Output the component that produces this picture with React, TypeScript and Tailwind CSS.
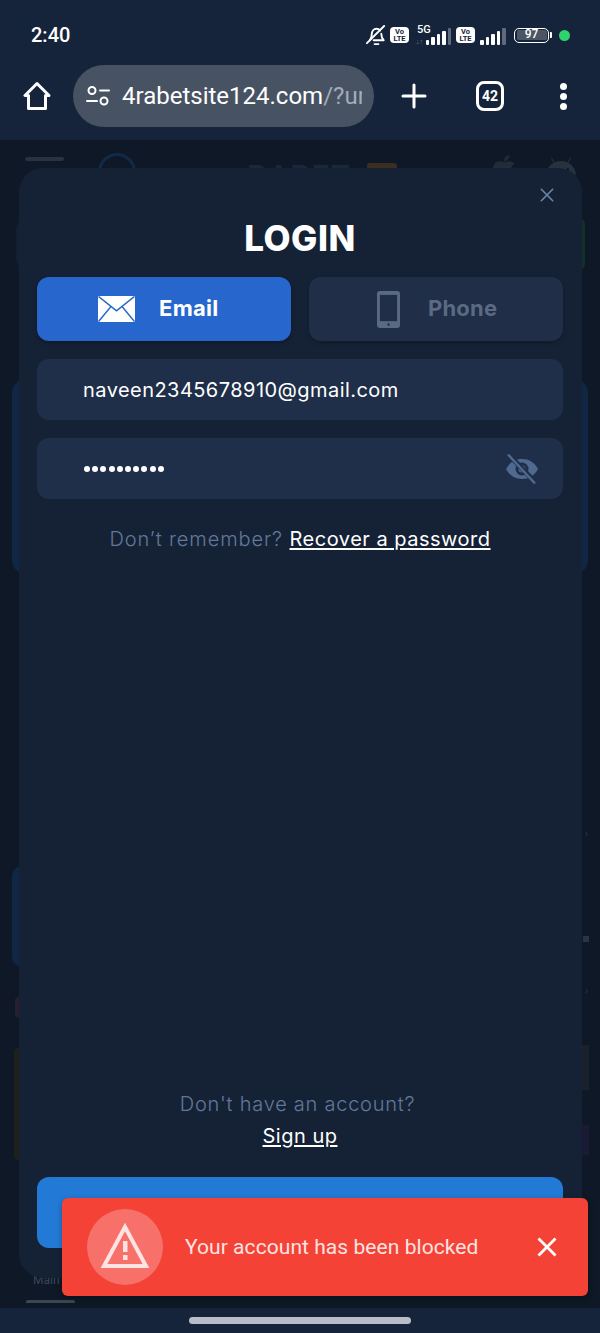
import React from "react";
import { FaApple, FaAndroid } from "react-icons/fa";

const poppins = { fontFamily: "Inter, 'Noto Sans', sans-serif" };

function Bars() {
  const hs = [5, 8, 11, 14, 17];
  return (
    <div className="flex items-end gap-[2px] h-[17px]">
      {hs.map((h, i) => (
        <div key={i} className={`w-[3.5px] rounded-[1px] ${i < 4 ? "bg-white" : "bg-[#5f6b7d]"}`} style={{ height: h }} />
      ))}
    </div>
  );
}

function VoLte() {
  return (
    <div className="w-[19px] h-[16px] rounded-[4px] bg-white flex flex-col items-center justify-center text-[#15243a] font-bold text-[7.5px] leading-[7px] font-['Roboto']">
      <span>Vo</span>
      <span>LTE</span>
    </div>
  );
}

function StatusBar() {
  return (
    <div className="h-[65px] flex items-end pb-[18px] pl-[31px] pr-[30px] justify-between">
      <span className="text-white text-[20px] leading-[24px] font-['Roboto'] font-medium">2:40</span>
      <div className="flex items-center h-[24px]">
        <svg width="21" height="23" viewBox="0 0 22 24" fill="none" stroke="#fff" strokeWidth="2" strokeLinecap="round" strokeLinejoin="round">
          <path d="M4 17c1.500-1.500 2-3 2-6 0-3.500 2.200-6 5-6 1.500 0 2.800.6 3.700 1.700" />
          <path d="M16 10c0 3 .5 5 2.500 7H8" />
          <path d="M1 20 19 2" />
          <path d="M9 21h4" />
        </svg>
        <div className="ml-[3px]"><VoLte /></div>
        <div className="relative ml-[7px] w-[35px] h-[20px] flex justify-end items-end">
          <span className="absolute left-[1px] -top-[1px] text-white text-[11px] leading-[11px] font-['Roboto'] font-medium">5G</span>
          <span className="absolute left-0 bottom-0 text-[#7b8595] text-[7px] leading-[7px]">↓↑</span>
          <Bars />
        </div>
        <div className="ml-[5px]"><VoLte /></div>
        <div className="ml-[5px] mt-[3px]"><Bars /></div>
        <div className="ml-[8.5px] flex items-center">
          <div className="w-[35px] h-[15px] rounded-[5px] border-[1.5px] border-white p-[1.5px]">
            <div className="w-full h-full bg-[#4b5563] rounded-[1.5px] text-white text-[12px] leading-[9px] font-['Roboto'] font-medium text-center">97</div>
          </div>
          <div className="w-[2px] h-[6px] bg-white ml-[1px] rounded-r-[1px]" />
        </div>
        <div className="w-[11px] h-[11px] rounded-full bg-[#2fd36b] ml-[7px]" />
      </div>
    </div>
  );
}

function Toolbar() {
  return (
    <div className="h-[75px] flex items-start">
      <div className="w-[73px] h-[62px] flex items-center justify-center">
        <svg width="28" height="30" viewBox="0 0 28 30" fill="none" stroke="#fff" strokeWidth="3" strokeLinejoin="round">
          <path d="M14 2.500 2 14.500h3.500v13h17v-13H26Z" />
        </svg>
      </div>
      <div className="w-[301px] h-[62px] rounded-full bg-[#475263] flex items-center pl-[13px]">
        <svg width="24" height="22" viewBox="0 0 24 22" fill="none" stroke="#fff" strokeWidth="2" strokeLinecap="round">
          <circle cx="6" cy="5.500" r="3.500" />
          <path d="M14 5.500h9" />
          <circle cx="18" cy="16" r="3.500" />
          <path d="M1 16h10" />
        </svg>
        <div className="ml-[12px] w-[240px] overflow-hidden whitespace-nowrap text-[24px] leading-[30px] font-['Roboto'] text-white">
          4rabetsite124.com<span className="text-[#a3abb7]">/?ur</span>
        </div>
      </div>
      <div className="w-[80px] h-[62px] flex items-center justify-center">
        <svg width="26" height="26" viewBox="0 0 26 26" stroke="#fff" strokeWidth="3" strokeLinecap="round">
          <path d="M13 2v22M2 13h22" />
        </svg>
      </div>
      <div className="w-[72px] h-[62px] flex items-center justify-center">
        <div className="w-[28px] h-[30px] rounded-[8px] border-[3px] border-white flex items-center justify-center text-white font-['Roboto'] font-bold text-[14px] leading-none">42</div>
      </div>
      <div className="flex-1 h-[62px] flex flex-col items-center justify-center gap-[3px]">
        <div className="w-[7px] h-[7px] rounded-full bg-white" />
        <div className="w-[7px] h-[7px] rounded-full bg-white" />
        <div className="w-[7px] h-[7px] rounded-full bg-white" />
      </div>
    </div>
  );
}

function DimBackground() {
  return (
    <div className="flex-1 relative overflow-hidden bg-[#0e1826]">
      <div className="flex items-start pt-[13px] pl-[25px]">
        <div className="w-[39px] h-[4px] mt-[4px] bg-[#283341] rounded-full" />
        <div className="ml-[34px] w-[38px] h-[38px] rounded-full border-[3px] border-[#122a47]" />
        <div className="ml-[100px] mt-[8px] w-[122px] text-[#1a283b] font-bold text-[30px] leading-[30px] font-['Roboto'] tracking-[2px] whitespace-nowrap">‹RABET</div>
        <div className="ml-[9px] mt-[10px] w-[30px] h-[16px] rounded-[3px] bg-[#3a2f1f]" />
        <div className="ml-[92px] text-[#222c38]"><FaApple size={30} /></div>
        <div className="ml-[27px] text-[#28323e]"><FaAndroid size={30} /></div>
      </div>
      <div className="absolute left-[16px] right-[15px] top-[78px] h-[52px] rounded-[12px] bg-[#112034]">
        <div className="absolute right-0 inset-y-0 w-[6px] rounded-r-[12px] bg-[#12302a]" />
      </div>
      <div className="absolute left-[12px] right-[12px] top-[239px] h-[195px] rounded-[14px] bg-[#0f2745]" />
      <div className="absolute left-[12px] w-[40px] top-[726px] h-[101px] rounded-[10px] bg-[#0f2745]" />
      <div className="absolute left-[15px] top-[857px] w-[8px] h-[21px] rounded-full bg-[#271f2e]" />
      <div className="absolute left-[14px] top-[908px] w-[8px] h-[112px] rounded-[6px] bg-[#1d2119]" />
      <div className="absolute right-[12px] top-[688px] text-[#2a3543] text-[10px] leading-[10px]">›</div>
      <div className="absolute right-[12px] top-[845px] text-[#2a3543] text-[10px] leading-[10px]">›</div>
      <div className="absolute right-[11px] top-[796px] w-[6px] h-[6px] bg-[#2a3543]" />
      <div className="absolute right-[11px] top-[905px] w-[7px] h-[45px] bg-[#1a212c]" />
      <div className="absolute right-[11px] top-[985px] w-[7px] h-[30px] bg-[#1b1a35]" />
      <div className="absolute left-[33px] top-[1133px] text-[#3a4656] text-[12px] leading-[14px] font-['Roboto']">Main</div>
      <div className="absolute left-[26px] top-[1160px] w-[49px] h-[3px] rounded-t-[2px] bg-[#3b4654]" />
    </div>
  );
}

function Modal() {
  return (
    <div style={poppins} className="absolute left-[19px] top-[168px] w-[563px] h-[1110px] rounded-[24px] bg-[#152236] pl-[18px] pr-[19px] flex flex-col">
      <div className="flex justify-end h-[50px] pt-[20px] mr-[9px]">
        <svg width="14" height="14" viewBox="0 0 16 16" stroke="#6f86a6" strokeWidth="1.800" strokeLinecap="round">
          <path d="M1.500 1.500l13 13M14.500 1.500l-13 13" />
        </svg>
      </div>
      <h1 className="text-white text-center font-extrabold text-[35px] leading-[40px] tracking-[0.5px]">LOGIN</h1>
      <div className="grid grid-cols-2 gap-[18px] mt-[19px]">
        <div className="h-[64px] rounded-[12px] bg-[#2766cc] shadow-[0_2px_4px_rgba(0,0,0,0.3)] flex items-center pl-[61px] gap-[24px]">
          <svg width="37" height="26" viewBox="0 0 38 30" preserveAspectRatio="none">
            <rect width="38" height="30" fill="#fff" />
            <path d="M0.500 0.500 19 17 37.500 0.500M0.500 29.500 13 12.500M37.500 29.500 25 12.500" fill="none" stroke="#2766cc" strokeWidth="1.600" />
          </svg>
          <span className="text-white font-bold text-[22px] leading-[26px] tracking-[0.3px] pb-[2px]">Email</span>
        </div>
        <div className="h-[64px] rounded-[12px] bg-[#202e47] shadow-[0_2px_4px_rgba(0,0,0,0.25)] flex items-center pl-[68px] gap-[28px]">
          <svg width="23" height="37" viewBox="0 0 24 38" preserveAspectRatio="none">
            <rect width="24" height="38" rx="3" fill="#5b6a83" />
            <rect x="3" y="4" width="18" height="27" fill="#202e47" />
            <circle cx="12" cy="34.500" r="1.300" fill="#202e47" />
          </svg>
          <span className="text-[#5b6a83] font-bold text-[22px] leading-[26px] tracking-[0.2px] pb-[2px]">Phone</span>
        </div>
      </div>
      <div className="mt-[18px] h-[61px] rounded-[12px] bg-[#1f2f49] flex items-center pl-[46px] text-white text-[20px] leading-[26px] tracking-[0.45px]">
        naveen2345678910@gmail.com
      </div>
      <div className="mt-[18px] h-[61px] rounded-[12px] bg-[#1f2f49] flex items-center justify-between pl-[47px] pr-[23px]">
        <div className="flex gap-[2.200px]">
          {Array.from({ length: 10 }).map((_, i) => (
            <div key={i} className="w-[6px] h-[6px] rounded-full bg-white" />
          ))}
        </div>
        <svg width="36" height="32" viewBox="0 0 36 32">
          <path d="M2 16C6 9 11 6 18 6s12 3 16 10c-4 7-9 10-16 10S6 23 2 16Z" fill="#4f6a8e" />
          <circle cx="18" cy="16" r="6.500" fill="#1f2f49" />
          <circle cx="18" cy="16" r="3.500" fill="#4f6a8e" />
          <path d="M5 2l27 28" stroke="#1f2f49" strokeWidth="5" />
          <path d="M4 1.500l27 29" stroke="#4f6a8e" strokeWidth="2.500" />
        </svg>
      </div>
      <p className="mt-[27px] text-center text-[20px] leading-[26px] tracking-[0.9px] font-light text-[#62789a]">
        Don’t remember? <span className="font-normal tracking-[0.5px] text-white underline underline-offset-2">Recover a password</span>
      </p>
      <div className="flex-1" />
      <p className="pr-[5px] text-center text-[20px] leading-[26px] tracking-[0.75px] font-light text-[#62789a]">Don't have an account?</p>
      <p className="mt-[6px] text-center text-[20px] leading-[26px] tracking-[0.5px] text-white underline underline-offset-2">Sign up</p>
      <div className="mt-[28px] mb-[30px] h-[71px] rounded-[12px] bg-[#237ad6]" />
    </div>
  );
}

function Toast() {
  return (
    <div className="absolute left-[62px] top-[1198px] w-[526px] h-[98px] rounded-[6px] bg-[#f44336] shadow-[0_2px_6px_rgba(0,0,0,0.3)] flex items-center pl-[25px] pr-[31px] font-['Roboto']">
      <div className="w-[76px] h-[76px] rounded-full bg-[#f7716a] flex items-center justify-center shrink-0">
        <svg width="52" height="50" viewBox="0 0 52 50" fill="none">
          <path d="M26 5 47 44H5Z" stroke="#fde3e1" strokeWidth="4" strokeLinejoin="miter" />
          <rect x="24" y="19" width="4.500" height="11" fill="#fde3e1" />
          <rect x="24" y="33" width="4.500" height="5" fill="#fde3e1" />
        </svg>
      </div>
      <span className="ml-[22px] text-[#fde3e1] text-[21px] leading-[28px] tracking-[0.06px] flex-1">Your account has been blocked</span>
      <svg width="20" height="20" viewBox="0 0 20 20" stroke="#fff" strokeWidth="2.800">
        <path d="M1.500 1.500l17 17M18.500 1.500l-17 17" />
      </svg>
    </div>
  );
}

export default function App() {
  return (
    <div className="relative w-[600px] h-[1333px] bg-[#15243a] overflow-hidden flex flex-col">
      <StatusBar />
      <Toolbar />
      <DimBackground />
      <div className="h-[25px] flex items-center justify-center">
        <div className="w-[222px] h-[7px] rounded-full bg-[#b9bdc8]" />
      </div>
      <Modal />
      <Toast />
    </div>
  );
}
